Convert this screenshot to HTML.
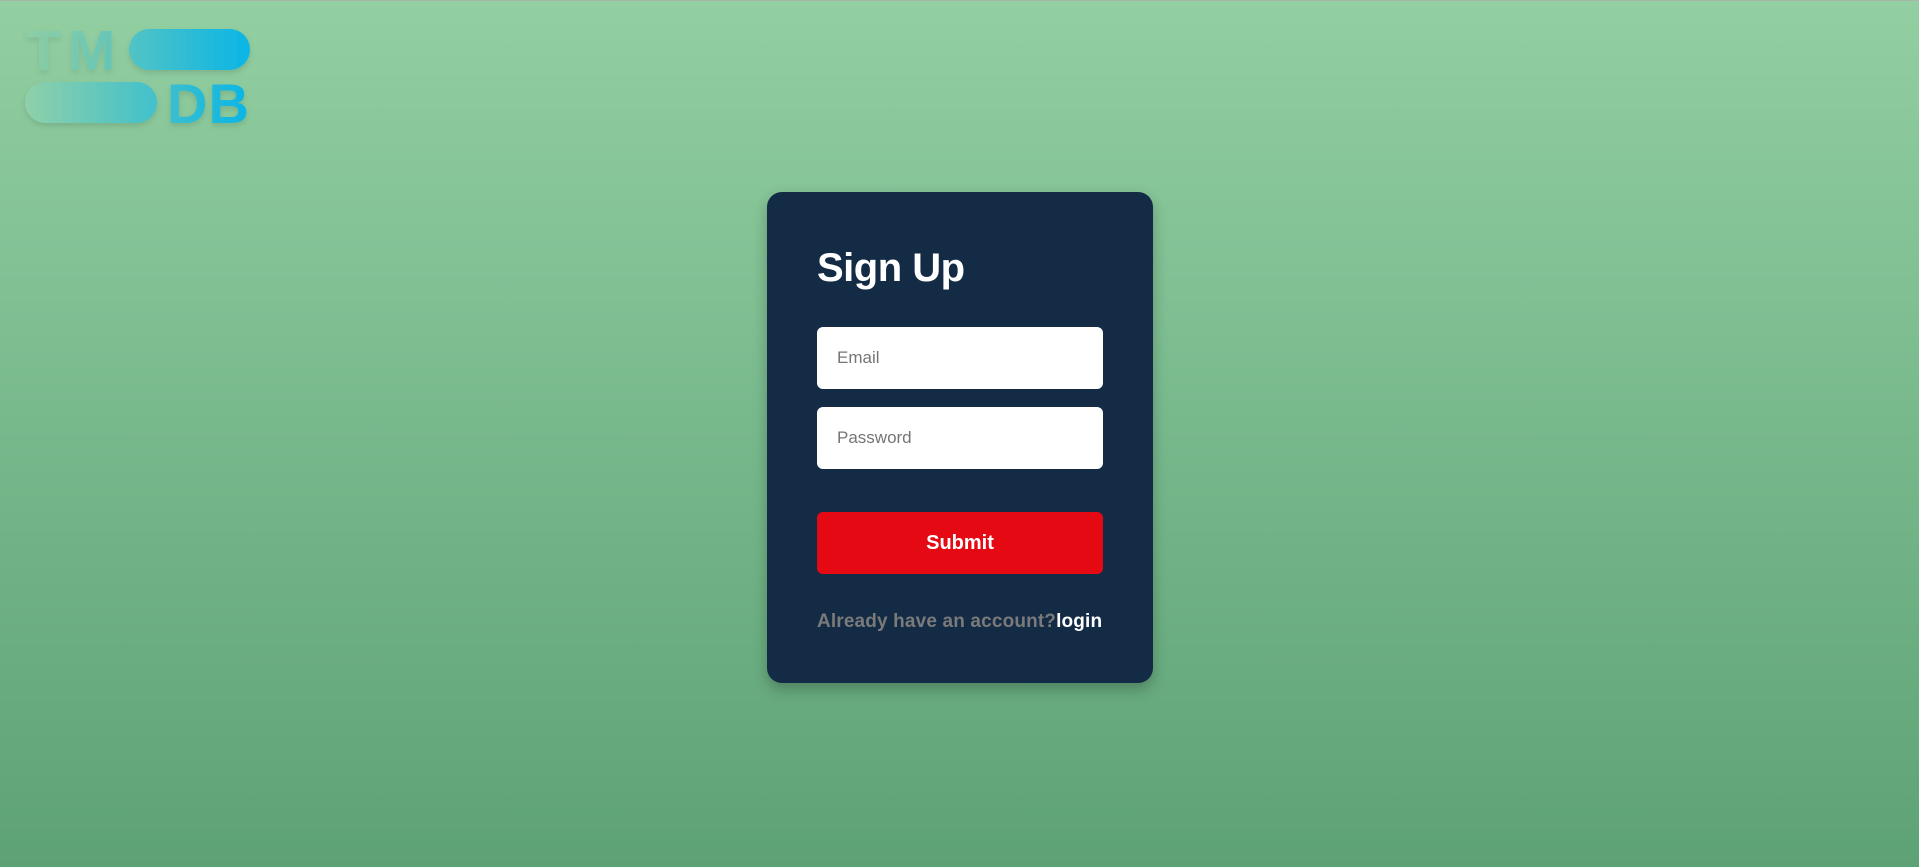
<!DOCTYPE html>
<html><head><meta charset="utf-8"><style>
html,body{margin:0;padding:0;width:1919px;height:867px;overflow:hidden}
body{background:linear-gradient(to bottom,#92cfa2 0%,#5da275 100%);border-top:1px solid #a9b5ab;box-sizing:border-box;position:relative;font-family:"Liberation Sans",sans-serif}
.logo{position:absolute;left:0;top:0;width:280px;height:140px}
.card{position:absolute;left:767px;top:191px;width:386px;height:491px;background:#132b45;border-radius:15px;box-shadow:0 6px 14px rgba(0,0,0,.25)}
h1{position:absolute;left:50px;top:51px;margin:0;color:#fff;font-size:40px;font-weight:bold;line-height:50px;letter-spacing:-0.5px}
.inp{position:absolute;left:50px;width:286px;height:62px;background:#fff;border-radius:6px;color:#757575;font-size:17px;line-height:62px;box-sizing:border-box;padding-left:20px}
.btn{position:absolute;left:50px;top:320px;width:286px;height:62px;background:#e50914;border-radius:6px;color:#fff;font-weight:bold;font-size:20px;line-height:62px;text-align:center}
.foot{position:absolute;left:50px;top:418px;width:300px;font-size:19px;font-weight:bold;color:#7a7a7a;white-space:nowrap;line-height:24px;letter-spacing:0.15px}
.foot b{color:#fff}
</style></head><body>
<svg class="logo" viewBox="0 0 280 140" xmlns="http://www.w3.org/2000/svg">
<defs>
<linearGradient id="g" x1="25" y1="0" x2="250" y2="0" gradientUnits="userSpaceOnUse">
<stop offset="0" stop-color="#8fd0a8"/><stop offset="1" stop-color="#0ab5e6"/></linearGradient>
<filter id="s" x="-10%" y="-10%" width="130%" height="140%"><feDropShadow dx="0" dy="3" stdDeviation="3" flood-color="#000" flood-opacity="0.12"/></filter>
</defs>
<g fill="url(#g)" filter="url(#s)">
<text x="26" y="69" font-family="Liberation Sans,sans-serif" font-weight="bold" font-size="57" letter-spacing="7" opacity="0.75">TM</text>
<rect x="129" y="28" width="121" height="41" rx="20.5"/>
<rect x="25" y="81" width="132" height="41" rx="20.5"/>
<text x="167" y="122" font-family="Liberation Sans,sans-serif" font-weight="bold" font-size="56" letter-spacing="1">DB</text>
</g>
</svg>
<div class="card">
<h1>Sign Up</h1>
<div class="inp" style="top:135px">Email</div>
<div class="inp" style="top:215px">Password</div>
<div class="btn">Submit</div>
<div class="foot">Already have an account?<b>login</b></div>
</div>
</body></html>
